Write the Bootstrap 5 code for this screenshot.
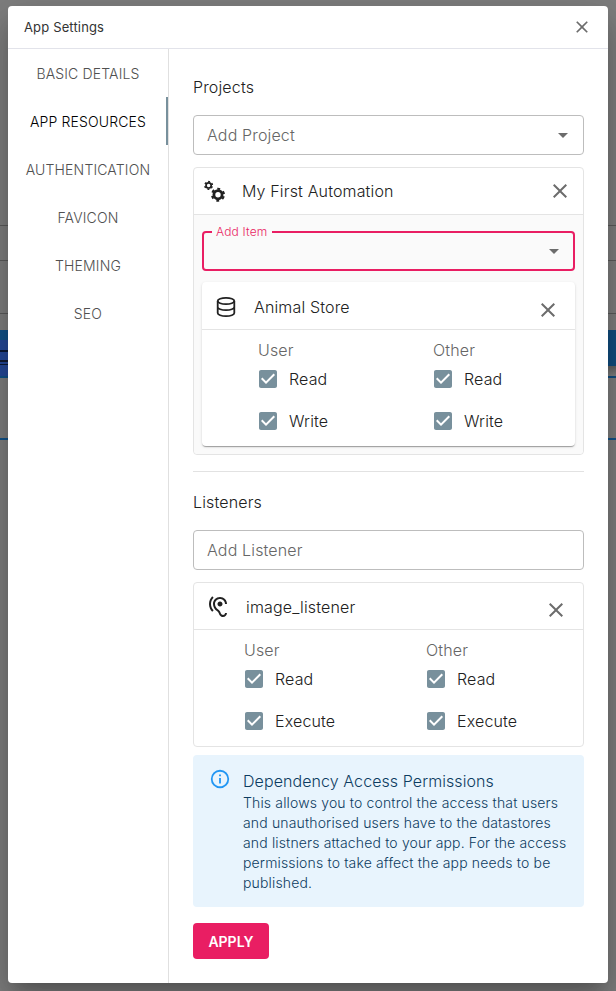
<!DOCTYPE html>
<html lang="en">
<head>
<meta charset="utf-8">
<meta name="viewport" content="width=device-width, initial-scale=1">
<title>App Settings</title>
<link href="https://cdn.jsdelivr.net/npm/bootstrap@5.3.0/dist/css/bootstrap.min.css" rel="stylesheet">
<style>
body{font-family:Inter,"Liberation Sans",sans-serif;font-size:16px;line-height:24px;letter-spacing:.15px;font-weight:300;color:#212121;background:#7f7f7f;height:991px;overflow:hidden}
svg{display:block;flex:none;fill:currentColor}
.no-fill{fill:none}
.page-behind{z-index:0;padding-top:225px}
.rule{height:1px;background:#5c5c5c}
.sp34{height:34px}.sp52{height:52px}.sp16{height:16px}
.band{height:48px}
.band-left{width:8px;background:linear-gradient(#12538a 0 10px,#26499a 10px 20px,#0c1a36 20px 22px,#26499a 22px 30px,#141c33 30px 32px,#26499a 32px 34px,#0c1a36 34px 35px,#26499a 35px 46px,#12538a 46px)}
.band-right{width:8px;background:linear-gradient(#124e80 0 36px,#646464 36px 37px,#7f7f7f 45px,#7f7f7f 46px,#124e80 46px)}
.blue-rule{height:2px;background:#12538a;margin-top:60px}
.dialog{z-index:1;width:600px;height:977px;margin:6px 8px 0;border-radius:4px;box-shadow:0 11px 15px -7px rgba(0,0,0,.2),0 24px 38px 3px rgba(0,0,0,.14),0 9px 46px 8px rgba(0,0,0,.12)}
.dialog-head{height:43px;padding:0 16px;border-bottom:1px solid #e2e3ea;font-size:13px;font-weight:400;letter-spacing:.15px;color:#333}
.grey{color:#6c6c6c}
.tabs{width:161px;border-right:1px solid #e0e0e0}
.tabs .nav-link{height:48px;padding:1px 0 0 2px;border-radius:0;color:#505050;font-size:14px;font-weight:300;letter-spacing:.15px;border-right:2px solid transparent}
.tabs .nav-link.active{color:#000;border-right-color:#78909c}
.pane{min-width:0;padding:26px 24px 0}
.field{height:40px;border:1px solid #bdbdbd;border-radius:4px;padding:0 8px 0 13px;margin-top:16px;color:#666}
.panel{border:1px solid #e4e4e4;border-radius:4px;margin-top:12px}
.panel-head{height:47px;border-bottom:1px solid #e4e4e4;gap:16px}
.panel-body{background:#fafafa;padding:12px 8px 8px;border-radius:0 0 4px 4px}
.head-project{padding:0 11px 0 8px}
.head-item{padding:2px 15px 0 12px}
.head-store{height:48px}
.drop{margin-top:6px}
fieldset.item{height:44px;border:2px solid #e91e63;border-radius:4px;margin:0 0 11px;padding:0 7px 0 8px}
fieldset.item legend{float:none;width:auto;height:10px;line-height:10px;font-size:12px;padding:0 5px 0 4px;margin:0;color:#e91e63;letter-spacing:.17px}
.arrow-row{padding-top:2px}
.store{border-radius:4px;height:164px;box-shadow:0 2px 1px -1px rgba(0,0,0,.2),0 1px 1px rgba(0,0,0,.14),0 1px 3px rgba(0,0,0,.12)}
.perm .check{height:42px;gap:9px}
.perm .check svg{color:#78909c}
.perm .heading{height:24px;color:#666}
.checks{margin-top:-4px;margin-left:-2px}
.perm-a{padding:8px 0 0 56px}.perm-a .perm-user{width:175px}
.perm-b{padding:8px 0 0 50px}.perm-b .perm-user{width:182px}
.listener{height:165px}
.divider{height:1px;background:#e2e2e2;margin:16px 0 18px}
.note{background:#e8f4fd;color:#0d3c61;border-radius:4px;height:152px;padding:13px 16px 0;margin-top:8px}
.note p{font-size:14px;line-height:20px;letter-spacing:.15px}
.info{color:#2196f3;margin-right:12px}
.note-title{line-height:24px;padding-top:1px;letter-spacing:.08px}
.btn-apply{width:76px;height:36px;margin-top:16px;padding:0;background:#e91e63;color:#fff;font-size:14px;font-weight:600;border:0;border-radius:4px;letter-spacing:0}
</style>
</head>
<body>
<div class="page-behind position-absolute top-0 start-0 w-100">
  <div class="rule"></div><div class="sp34"></div>
  <div class="rule"></div><div class="sp52"></div>
  <div class="rule"></div><div class="sp16"></div>
  <div class="d-flex justify-content-between"><div class="band band-left"></div><div class="band band-right"></div></div>
  <div class="blue-rule"></div>
</div>

<main class="dialog bg-white position-relative d-flex flex-column">
  <header class="dialog-head d-flex align-items-center justify-content-between">
    <span>App Settings</span>
    <svg class="grey" width="20" height="20" viewBox="0 0 24 24"><path d="M19 6.41 17.59 5 12 10.59 6.41 5 5 6.41 10.59 12 5 17.59 6.41 19 12 13.41 17.59 19 19 17.59 13.41 12z"/></svg>
  </header>
  <div class="d-flex flex-grow-1">
    <nav class="tabs nav flex-column flex-nowrap flex-shrink-0">
      <a class="nav-link d-flex align-items-center justify-content-center">BASIC DETAILS</a>
      <a class="nav-link active d-flex align-items-center justify-content-center">APP RESOURCES</a>
      <a class="nav-link d-flex align-items-center justify-content-center">AUTHENTICATION</a>
      <a class="nav-link d-flex align-items-center justify-content-center">FAVICON</a>
      <a class="nav-link d-flex align-items-center justify-content-center">THEMING</a>
      <a class="nav-link d-flex align-items-center justify-content-center">SEO</a>
    </nav>
    <section class="pane flex-grow-1">
      <div>Projects</div>
      <div class="field d-flex align-items-center justify-content-between">
        <span>Add Project</span>
        <svg class="grey" width="24" height="24" viewBox="0 0 24 24"><path d="m7 10 5 5 5-5z"/></svg>
      </div>
      <div class="panel">
        <div class="panel-head head-project d-flex align-items-center">
          <svg width="24" height="24" viewBox="0 0 24 24" stroke="currentColor" class="no-fill">
            <circle cx="6.6" cy="6.4" r="2.6" stroke-width="1.7"/>
            <circle cx="6.6" cy="6.4" r="3.8" stroke-width="1.5" stroke-dasharray="1.9 2.079" stroke-dashoffset="-1.04"/>
            <circle cx="16" cy="15.7" r="4.1" stroke-width="2.8"/>
            <circle cx="16" cy="15.7" r="6" stroke-width="2" stroke-dasharray="2.9 3.383" stroke-dashoffset="-1.69"/>
          </svg>
          <span class="flex-grow-1">My First Automation</span>
          <svg class="grey" width="24" height="24" viewBox="0 0 24 24"><path d="M19 6.41 17.59 5 12 10.59 6.41 5 5 6.41 10.59 12 5 17.59 6.41 19 12 13.41 17.59 19 19 17.59 13.41 12z"/></svg>
        </div>
        <div class="panel-body">
          <fieldset class="item">
            <legend>Add Item</legend>
            <div class="arrow-row d-flex justify-content-end"><svg class="grey" width="24" height="24" viewBox="0 0 24 24"><path d="m7 10 5 5 5-5z"/></svg></div>
          </fieldset>
          <div class="store bg-white">
            <div class="panel-head head-item head-store d-flex align-items-center">
              <svg class="no-fill" width="24" height="24" viewBox="0 0 24 24" stroke="currentColor" stroke-width="1.8"><ellipse cx="12" cy="6" rx="8.3" ry="3.2"/><path d="M3.7 6v12c0 1.8 3.7 3.2 8.3 3.2s8.3-1.4 8.3-3.2V6M3.7 12c0 1.8 3.7 3.2 8.3 3.2s8.3-1.4 8.3-3.2"/></svg>
              <span class="flex-grow-1">Animal Store</span>
              <svg class="grey drop" width="24" height="24" viewBox="0 0 24 24"><path d="M19 6.41 17.59 5 12 10.59 6.41 5 5 6.41 10.59 12 5 17.59 6.41 19 12 13.41 17.59 19 19 17.59 13.41 12z"/></svg>
            </div>
            <div class="perm perm-a d-flex">
              <div class="perm-user"><div class="heading">User</div><div class="checks">
                <div class="check d-flex align-items-center"><svg width="24" height="24" viewBox="0 0 24 24"><path d="M19 3H5c-1.11 0-2 .9-2 2v14c0 1.1.89 2 2 2h14c1.11 0 2-.9 2-2V5c0-1.1-.89-2-2-2zm-9 14-5-5 1.41-1.41L10 14.17l7.59-7.59L19 8l-9 9z"/></svg>Read</div>
                <div class="check d-flex align-items-center"><svg width="24" height="24" viewBox="0 0 24 24"><path d="M19 3H5c-1.11 0-2 .9-2 2v14c0 1.1.89 2 2 2h14c1.11 0 2-.9 2-2V5c0-1.1-.89-2-2-2zm-9 14-5-5 1.41-1.41L10 14.17l7.59-7.59L19 8l-9 9z"/></svg>Write</div></div></div>
              <div><div class="heading">Other</div><div class="checks">
                <div class="check d-flex align-items-center"><svg width="24" height="24" viewBox="0 0 24 24"><path d="M19 3H5c-1.11 0-2 .9-2 2v14c0 1.1.89 2 2 2h14c1.11 0 2-.9 2-2V5c0-1.1-.89-2-2-2zm-9 14-5-5 1.41-1.41L10 14.17l7.59-7.59L19 8l-9 9z"/></svg>Read</div>
                <div class="check d-flex align-items-center"><svg width="24" height="24" viewBox="0 0 24 24"><path d="M19 3H5c-1.11 0-2 .9-2 2v14c0 1.1.89 2 2 2h14c1.11 0 2-.9 2-2V5c0-1.1-.89-2-2-2zm-9 14-5-5 1.41-1.41L10 14.17l7.59-7.59L19 8l-9 9z"/></svg>Write</div></div></div>
            </div>
          </div>
        </div>
      </div>
      <div class="divider"></div>
      <div>Listeners</div>
      <div class="field d-flex align-items-center">Add Listener</div>
      <div class="panel listener">
        <div class="panel-head head-item d-flex align-items-center">
          <svg width="24" height="24" viewBox="0 0 24 24"><path d="M17 20c-.29 0-.56-.06-.76-.15-.71-.37-1.21-.88-1.71-2.38-.51-1.56-1.47-2.29-2.39-3-.79-.61-1.61-1.24-2.32-2.53C9.29 10.98 9 9.93 9 9c0-2.8 2.2-5 5-5s5 2.2 5 5h2c0-3.93-3.07-7-7-7S7 5.07 7 9c0 1.26.38 2.65 1.07 3.9.91 1.65 1.98 2.48 2.85 3.15.81.62 1.39 1.07 1.71 2.05.6 1.82 1.37 2.84 2.73 3.55.51.23 1.07.35 1.64.35 2.21 0 4-1.79 4-4h-2c0 1.1-.9 2-2 2zM7.64 2.64 6.22 1.22C4.23 3.21 3 5.96 3 9s1.23 5.79 3.22 7.78l1.41-1.41C6.01 13.74 5 11.49 5 9s1.01-4.74 2.64-6.36zM11.5 9c0 1.38 1.12 2.5 2.5 2.5s2.5-1.12 2.5-2.5-1.12-2.5-2.5-2.5-2.5 1.12-2.5 2.5z"/></svg>
          <span class="flex-grow-1">image_listener</span>
          <svg class="grey drop" width="24" height="24" viewBox="0 0 24 24"><path d="M19 6.41 17.59 5 12 10.59 6.41 5 5 6.41 10.59 12 5 17.59 6.41 19 12 13.41 17.59 19 19 17.59 13.41 12z"/></svg>
        </div>
        <div class="perm perm-b d-flex">
          <div class="perm-user"><div class="heading">User</div><div class="checks">
            <div class="check d-flex align-items-center"><svg width="24" height="24" viewBox="0 0 24 24"><path d="M19 3H5c-1.11 0-2 .9-2 2v14c0 1.1.89 2 2 2h14c1.11 0 2-.9 2-2V5c0-1.1-.89-2-2-2zm-9 14-5-5 1.41-1.41L10 14.17l7.59-7.59L19 8l-9 9z"/></svg>Read</div>
            <div class="check d-flex align-items-center"><svg width="24" height="24" viewBox="0 0 24 24"><path d="M19 3H5c-1.11 0-2 .9-2 2v14c0 1.1.89 2 2 2h14c1.11 0 2-.9 2-2V5c0-1.1-.89-2-2-2zm-9 14-5-5 1.41-1.41L10 14.17l7.59-7.59L19 8l-9 9z"/></svg>Execute</div></div></div>
          <div><div class="heading">Other</div><div class="checks">
            <div class="check d-flex align-items-center"><svg width="24" height="24" viewBox="0 0 24 24"><path d="M19 3H5c-1.11 0-2 .9-2 2v14c0 1.1.89 2 2 2h14c1.11 0 2-.9 2-2V5c0-1.1-.89-2-2-2zm-9 14-5-5 1.41-1.41L10 14.17l7.59-7.59L19 8l-9 9z"/></svg>Read</div>
            <div class="check d-flex align-items-center"><svg width="24" height="24" viewBox="0 0 24 24"><path d="M19 3H5c-1.11 0-2 .9-2 2v14c0 1.1.89 2 2 2h14c1.11 0 2-.9 2-2V5c0-1.1-.89-2-2-2zm-9 14-5-5 1.41-1.41L10 14.17l7.59-7.59L19 8l-9 9z"/></svg>Execute</div></div></div>
        </div>
      </div>
      <div class="note d-flex">
        <svg class="info" width="22" height="22" viewBox="0 0 24 24"><path d="M11 9h2V7h-2m1 13c-4.41 0-8-3.59-8-8s3.59-8 8-8 8 3.59 8 8-3.59 8-8 8m0-18A10 10 0 0 0 2 12a10 10 0 0 0 10 10 10 10 0 0 0 10-10A10 10 0 0 0 12 2m-1 15h2v-6h-2v6z"/></svg>
        <div><div class="note-title">Dependency Access Permissions</div>
        <p class="mb-0">This allows you to control the access that users<br>and unauthorised users have to the datastores<br>and listners attached to your app. For the access<br>permissions to take affect the app needs to be<br>published.</p></div>
      </div>
      <button class="btn btn-apply">APPLY</button>
    </section>
  </div>
</main>
<script src="https://cdn.jsdelivr.net/npm/bootstrap@5.3.0/dist/js/bootstrap.bundle.min.js"></script>
</body>
</html>
